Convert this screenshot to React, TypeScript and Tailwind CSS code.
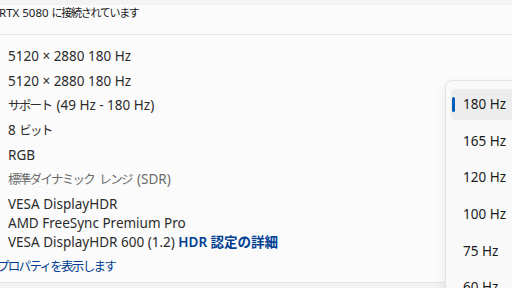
import React from 'react';

const FONT = { fontFamily: '"Noto Sans", "Noto Sans CJK JP", sans-serif' };

const RATES = ['180 Hz', '165 Hz', '120 Hz', '100 Hz', '75 Hz', '60 Hz'];

// Japanese runs are set tighter to match the narrower UI font of the original
const J = ({ children }: { children: React.ReactNode }) => (
  <span className="text-[12.5px] tracking-[-1.7px] mr-[1.7px]">{children}</span>
);

const ROWS: { text: React.ReactNode; muted?: boolean }[] = [
  { text: '5120 × 2880 180 Hz' },
  { text: '5120 × 2880 180 Hz' },
  { text: <><J>サポート</J> (49 Hz - 180 Hz)</> },
  { text: <>8 <J>ビット</J></> },
  { text: 'RGB' },
  { text: <><J>標準ダイナミック</J> <J>レンジ</J> (SDR)</>, muted: true },
];

export default function App() {
  return (
    <div className="relative w-[512px] h-[288px] overflow-hidden bg-[#f3f3f3] text-[#1b1b1b]" style={FONT}>
      {/* card */}
      <div className="mt-[5px] h-[278px] bg-[#fbfbfb] border-b border-[#e5e5e5] flex flex-col">
        <div className="h-[30px] border-b border-[#e5e5e5] -ml-[1px] text-[11.5px] leading-[15px] text-[#1b1b1b]">
          RTX 5080 <span className="text-[11px] tracking-[-1.3px]">に接続されています</span>
        </div>

        <div className="flex flex-col pl-[8px] pt-[9px]">
          {ROWS.map((r, i) => (
            <div
              key={i}
              className={`h-[24.7px] flex items-center text-[13.5px] ${r.muted ? 'text-[#6b6b6b]' : 'text-[#2b2b2b]'}`}
            >
              <span>{r.text}</span>
            </div>
          ))}
          <div className="mt-[3px] flex flex-col text-[13.5px] leading-[19px] text-[#2b2b2b]">
            <div>VESA DisplayHDR</div>
            <div>AMD FreeSync Premium Pro</div>
            <div>
              VESA DisplayHDR 600 (1.2){' '}
              <span className="font-semibold text-[#003e92]">HDR 認定の詳細</span>
            </div>
          </div>
        </div>

        <div className="-ml-[3px] mt-[5.5px] text-[12.5px] leading-[18px] text-[#003e92] tracking-[-1.7px]">
          プロパティを表示します
        </div>
      </div>

      {/* refresh-rate dropdown */}
      <div className="absolute left-[445px] top-[80px] w-[90px] h-[240px] rounded-[7px] border border-[#e3e3e3] bg-[#f9f9f9] shadow-[0_4px_12px_rgba(0,0,0,0.08)] pt-[5px]">
        {RATES.map((rate, i) => (
          <div key={rate} className="h-[36.6px] py-[2.8px] pl-[5px]">
            <div
              className={`relative h-[31px] rounded-[4px] flex items-center pl-[12px] text-[13.5px] text-[#1b1b1b] ${
                i === 0 ? 'bg-[#ededed]' : ''
              }`}
            >
              {i === 0 && (
                <span className="absolute left-[1px] top-[8px] h-[15px] w-[3px] rounded-full bg-[#005fb8]" />
              )}
              {rate}
            </div>
          </div>
        ))}
      </div>
    </div>
  );
}
